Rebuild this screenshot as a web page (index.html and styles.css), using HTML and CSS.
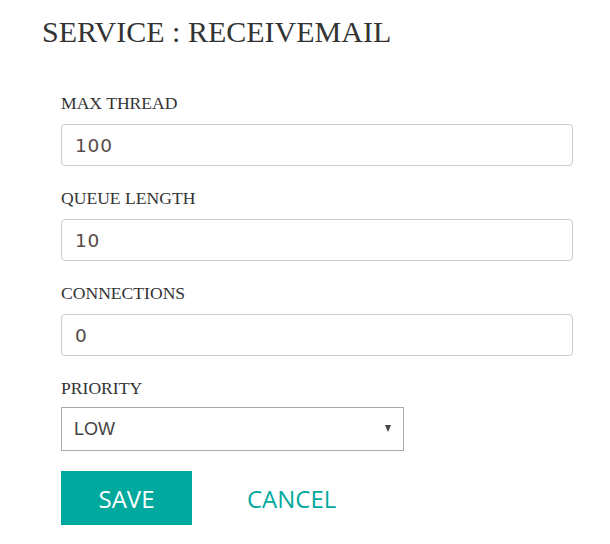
FILE: index.html
```html
<!DOCTYPE html>
<html lang="en">
<head>
    <meta charset="UTF-8">
    <title>Service : ReceiveMail</title>
    <link rel="stylesheet" href="styles.css">
</head>
<body>
    <h1 class="title">SERVICE : RECEIVEMAIL</h1>

    <form class="service-form">
        <div class="field">
            <label for="max-thread">MAX THREAD</label>
            <input id="max-thread" type="text" value="100">
        </div>
        <div class="field">
            <label for="queue-length">QUEUE LENGTH</label>
            <input id="queue-length" type="text" value="10">
        </div>
        <div class="field">
            <label for="connections">CONNECTIONS</label>
            <input id="connections" type="text" value="0">
        </div>
        <div class="field field-select">
            <label for="priority">PRIORITY</label>
            <div class="select-wrap">
                <select id="priority">
                    <option>LOW</option>
                    <option>MEDIUM</option>
                    <option>HIGH</option>
                </select>
                <span class="arrow"></span>
            </div>
        </div>
        <div class="actions">
            <button type="button" class="btn-save">SAVE</button>
            <button type="button" class="btn-cancel">CANCEL</button>
        </div>
    </form>
</body>
</html>
```

FILE: styles.css
```css
html, body {
    margin: 0;
    background: #fff;
}

body {
    padding: 15px 0 0 42px;
    font-family: "Liberation Serif", "Times New Roman", serif;
    color: #333;
}

.title {
    margin: 0;
    font-size: 30px;
    font-weight: normal;
    line-height: 34px;
    color: #333;
}

.service-form {
    width: 512px;
    margin: 44px 0 0 19px;
}

.field {
    display: flex;
    flex-direction: column;
    margin-bottom: 22px;
}

.field label {
    font-size: 17.6px;
    line-height: 20px;
    margin-bottom: 11px;
}

.field input {
    box-sizing: border-box;
    height: 42px;
    width: 100%;
    padding: 0 13px;
    border: 1px solid #ccc;
    border-radius: 4px;
    font-family: "DejaVu Sans", Verdana, sans-serif;
    font-size: 18.5px;
    letter-spacing: 0.8px;
    color: #554a4a;
    outline: none;
}

.field-select {
    margin-bottom: 20px;
}

.field-select label {
    margin-bottom: 9px;
}

.select-wrap {
    position: relative;
    width: 343px;
}

.select-wrap select {
    box-sizing: border-box;
    width: 100%;
    height: 44px;
    padding: 0 12px;
    border: 1px solid #aaa;
    border-radius: 0;
    background: #fff;
    font-family: "Liberation Sans", Arial, sans-serif;
    font-size: 18px;
    color: #444;
    -webkit-appearance: none;
    appearance: none;
}

.arrow {
    position: absolute;
    right: 13px;
    top: 18px;
    width: 0;
    height: 0;
    border-left: 3.5px solid transparent;
    border-right: 3.5px solid transparent;
    border-top: 7px solid #444;
    pointer-events: none;
}

.actions {
    display: flex;
    align-items: center;
}

.btn-save, .btn-cancel {
    font-family: "Open Sans", "Noto Sans", sans-serif;
    font-size: 24px;
    border: none;
    cursor: pointer;
}

.btn-save {
    width: 131px;
    height: 54px;
    padding: 0;
    background: #00a99d;
    color: #fff;
}

.btn-cancel {
    background: transparent;
    color: #00a99d;
    margin-left: 55px;
    padding: 0;
}
```
